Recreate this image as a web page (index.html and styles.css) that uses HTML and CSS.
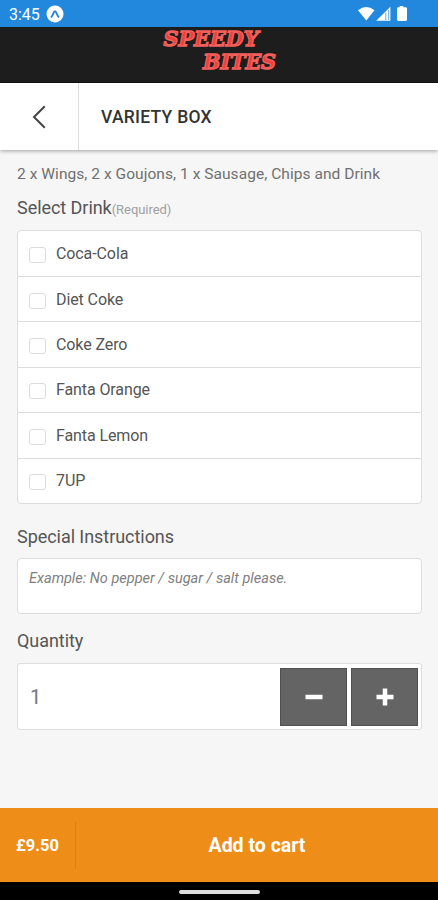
FILE: index.html
```
<!DOCTYPE html>
<html lang="en">
<head>
    <meta charset="UTF-8">
    <meta name="viewport" content="width=device-width, initial-scale=1.0">
    <title>Variety Box</title>
    <link rel="stylesheet" href="styles.css">
</head>
<body>
    <div class="status-bar">
        <span class="clock">3:45</span>
        <svg class="app-icon" width="18" height="18" viewBox="0 0 18 18">
            <circle cx="9" cy="9" r="8.5" fill="#fff"/>
            <path d="M5.5 11.8C7 10.5 7.6 6.3 9 6.3s2 4.200 3.500 5.500" fill="none" stroke="#2288dd" stroke-width="1.900" stroke-linecap="round"/>
        </svg>
        <svg class="status-icons" width="50" height="16" viewBox="0 0 50 16">
            <path d="M0 4.200Q8.200-2.200 16.500 4.200L8.300 14.500z" fill="#fff"/>
            <path d="M18.200 14.700L32.400.8v13.900z" fill="#fff"/>
            <path d="M27.800 6.800v7.200M30.700 4v10" stroke="#2288dd" stroke-width="1" opacity=".7"/>
            <path d="M41.700 0h3.600v1.300h2.400q1.300 0 1.300 1.300v11q0 1.400-1.300 1.400h-7.400q-1.300 0-1.300-1.400v-11q0-1.300 1.300-1.300h1.400z" fill="#fff"/>
        </svg>
    </div>

    <header class="brand">
        <svg class="logo" width="120" height="48" viewBox="0 0 120 48">
            <text x="3.500" y="19" textLength="95" lengthAdjust="spacingAndGlyphs">SPEEDY</text>
            <text x="43" y="42" textLength="73" lengthAdjust="spacingAndGlyphs">BITES</text>
        </svg>
    </header>

    <nav class="title-bar">
        <a class="back" href="#">
            <svg width="16" height="26" viewBox="0 0 16 26">
                <path d="M13.800 2.300L3 13l10.800 10.700" fill="none" stroke="#444" stroke-width="2"/>
            </svg>
        </a>
        <h1>VARIETY BOX</h1>
    </nav>

    <main>
        <p class="description">2 x Wings, 2 x Goujons, 1 x Sausage, Chips and Drink</p>

        <h2 class="drink-title">Select Drink<small>(Required)</small></h2>
        <ul class="options">
            <li><label><input type="checkbox"><span>Coca-Cola</span></label></li>
            <li><label><input type="checkbox"><span>Diet Coke</span></label></li>
            <li><label><input type="checkbox"><span>Coke Zero</span></label></li>
            <li><label><input type="checkbox"><span>Fanta Orange</span></label></li>
            <li><label><input type="checkbox"><span>Fanta Lemon</span></label></li>
            <li><label><input type="checkbox"><span>7UP</span></label></li>
        </ul>

        <h2 class="notes-title">Special Instructions</h2>
        <textarea class="notes" placeholder="Example: No pepper / sugar / salt please."></textarea>

        <h2 class="quantity-title">Quantity</h2>
        <div class="quantity">
            <span class="count">1</span>
            <button aria-label="Less">
                <svg width="18" height="18" viewBox="0 0 18 18"><path d="M.5 9h17" stroke="#fff" stroke-width="4.500"/></svg>
            </button>
            <button aria-label="More">
                <svg width="18" height="18" viewBox="0 0 18 18"><path d="M.5 9h17M9 .5v17" stroke="#fff" stroke-width="4.500"/></svg>
            </button>
        </div>
    </main>

    <footer class="cart-bar">
        <span class="price">£9.50</span>
        <span class="add">Add to cart</span>
    </footer>
    <div class="system-nav"><span></span></div>
</body>
</html>
```

FILE: styles.css
```
* {
    box-sizing: border-box;
}

body {
    margin: 0;
    height: 900px;
    display: flex;
    flex-direction: column;
    overflow: hidden;
    background: #f6f6f6;
    color: #555;
    font-family: Roboto, "Liberation Sans", sans-serif;
}

h1, h2, p, ul {
    margin: 0;
    padding: 0;
}

.status-bar {
    height: 27px;
    display: flex;
    align-items: center;
    padding: 1px 30px 0 9px;
    background: #2288dd;
    color: #fff;
}

.clock {
    width: 37px;
    font-size: 16px;
}

.status-icons {
    margin-left: auto;
}

.brand {
    height: 56px;
    padding-left: 160px;
    background: #1d1d1d;
    border-bottom: 1px solid #111;
}

.logo {
    display: block;
}

.logo text {
    font: italic bold 21px "DejaVu Serif", serif;
    fill: #ee3f3c;
    stroke: #f0605c;
    stroke-width: 1.4px;
}

.title-bar {
    height: 67px;
    display: flex;
    align-items: center;
    background: #fff;
    box-shadow: 0 1px 4px rgba(0, 0, 0, 0.35);
}

.back {
    width: 79px;
    height: 100%;
    display: flex;
    align-items: center;
    justify-content: center;
    border-right: 1px solid #ddd;
}

.title-bar h1 {
    padding-left: 22px;
    font-size: 17.500px;
    font-weight: 500;
    letter-spacing: 0.25px;
    color: #333;
}

main {
    flex: 1;
    padding: 14px 16px 0 17px;
}

.description {
    height: 20px;
    line-height: 20px;
    font-size: 15.500px;
    letter-spacing: 0.05px;
    white-space: nowrap;
    color: #707070;
}

h2 {
    height: 24px;
    line-height: 24px;
    font-size: 18px;
    font-weight: 400;
    letter-spacing: -0.05px;
    white-space: nowrap;
}

h2 small {
    font-size: 13px;
    color: #a0a0a0;
}

.drink-title {
    margin: 12px 0 10px;
}

.options {
    height: 274px;
    display: grid;
    grid-template-rows: 45px repeat(5, 1fr);
    list-style: none;
    background: #fff;
    border: 1px solid #ddd;
    border-radius: 4px;
}

.options li + li {
    border-top: 1px solid #ddd;
}

.options label {
    height: 100%;
    display: flex;
    align-items: center;
    padding-left: 11px;
    font-size: 16px;
    letter-spacing: -0.1px;
}

.options input {
    appearance: none;
    width: 17px;
    height: 16px;
    margin: 3px 10px 0 0;
    border: 1px solid #dcdcdc;
    border-radius: 3px;
    background: #fff;
}

.notes-title {
    margin: 21px 0 9px;
}

.notes {
    display: block;
    width: 100%;
    height: 56px;
    padding: 11px;
    border: 1px solid #ddd;
    border-radius: 4px;
    background: #fff;
    resize: none;
    font: italic 14.500px/18px Roboto, "Liberation Sans", sans-serif;
}

.notes::placeholder {
    color: #808080;
}

.quantity-title {
    margin: 15px 0 10px;
}

.quantity {
    height: 67px;
    display: flex;
    align-items: center;
    gap: 4px;
    padding: 0 3px 0 12px;
    border: 1px solid #ddd;
    border-radius: 3px;
    background: #fff;
}

.count {
    flex: 1;
    font-size: 20px;
    color: #777;
}

.quantity button {
    width: 67px;
    height: 58px;
    display: flex;
    align-items: center;
    justify-content: center;
    padding: 0;
    border: 1px solid #505050;
    background: #646464;
}

.cart-bar {
    height: 74px;
    display: flex;
    align-items: center;
    background: #ef8d19;
    color: #fff;
    font-weight: 700;
}

.price {
    width: 76px;
    height: 48px;
    line-height: 49px;
    padding-left: 16px;
    border-right: 1px solid #df801a;
    font-size: 16.500px;
}

.add {
    flex: 1;
    text-align: center;
    font-size: 19.500px;
}

.system-nav {
    height: 18px;
    padding-top: 8px;
    background: #000;
}

.system-nav span {
    display: block;
    width: 81px;
    height: 4px;
    margin: 0 auto;
    border-radius: 2px;
    background: #ddd;
}
```
